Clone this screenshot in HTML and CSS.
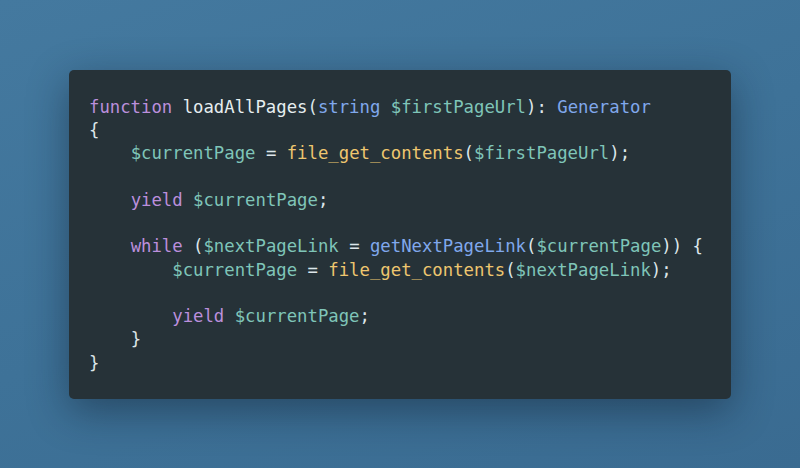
FILE: index.html
```html
<!DOCTYPE html>
<html>
<head>
<meta charset="utf-8">
<link rel="stylesheet" href="styles.css">
</head>
<body>
<div class="stage">
<pre class="card"><code><span class="kw">function</span> <span class="tx">loadAllPages</span><span class="pn">(</span><span class="ty">string</span> <span class="var">$firstPageUrl</span><span class="pn">):</span> <span class="ty">Generator</span>
<span class="pn">{</span>
    <span class="var">$currentPage</span> <span class="pn">=</span> <span class="fn">file_get_contents</span><span class="pn">(</span><span class="var">$firstPageUrl</span><span class="pn">);</span>

    <span class="kw">yield</span> <span class="var">$currentPage</span><span class="pn">;</span>

    <span class="kw">while</span> <span class="pn">(</span><span class="var">$nextPageLink</span> <span class="pn">=</span> <span class="ty">getNextPageLink</span><span class="pn">(</span><span class="var">$currentPage</span><span class="pn">)) {</span>
        <span class="var">$currentPage</span> <span class="pn">=</span> <span class="fn">file_get_contents</span><span class="pn">(</span><span class="var">$nextPageLink</span><span class="pn">);</span>

        <span class="kw">yield</span> <span class="var">$currentPage</span><span class="pn">;</span>
    <span class="pn">}</span>
<span class="pn">}</span></code></pre>
</div>
</body>
</html>
```
FILE: styles.css
```css
html, body {
  margin: 0;
  padding: 0;
}
body {
  width: 800px;
  height: 468px;
  background: linear-gradient(160deg, #44799f 0%, #3e7298 50%, #3a6b91 100%);
  overflow: hidden;
}
.stage {
  height: 468px;
  display: flex;
  align-items: center;
  justify-content: center;
}
.card {
  box-sizing: border-box;
  width: 662px;
  height: 329px;
  margin: 0;
  padding: 26px 20px 24px;
  background: #263238;
  border-radius: 5px;
  box-shadow: 0 12px 40px rgba(10, 25, 40, 0.45);
  font-family: "DejaVu Sans Mono", monospace;
  font-size: 17.3px;
  line-height: 23.3px;
  color: #e6eef0;
  white-space: pre;
}
.kw { color: #bb8fdc; }
.tx { color: #e6eef0; }
.pn { color: #dde6ea; }
.ty { color: #80a8ec; }
.var { color: #7fc5b8; }
.fn { color: #eec66f; }
```
